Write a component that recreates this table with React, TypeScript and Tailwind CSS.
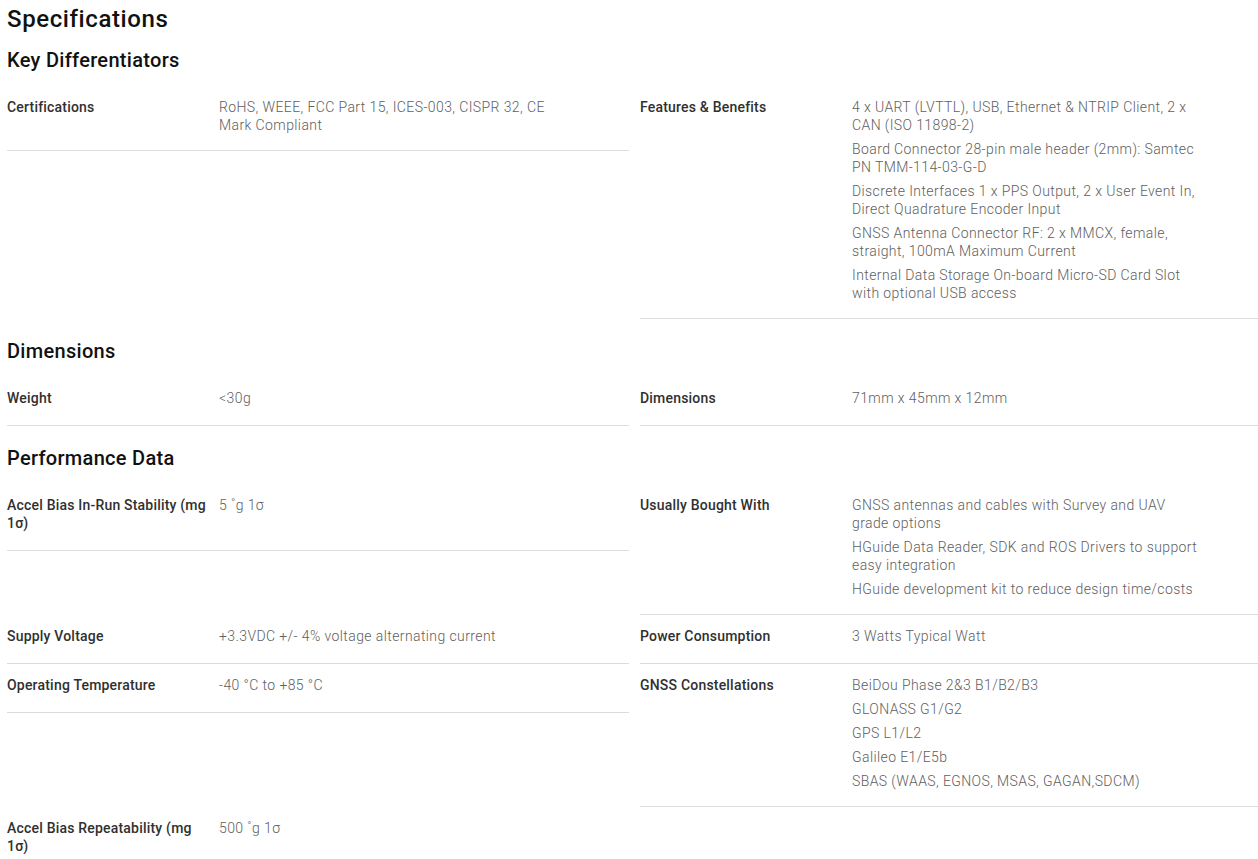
type Spec = {
  label: string;
  values: string[];
};

type Section = {
  title: string;
  items: Spec[];
};

const sections: Section[] = [
  {
    title: "Key Differentiators",
    items: [
      {
        label: "Certifications",
        values: ["RoHS, WEEE, FCC Part 15, ICES-003, CISPR 32, CE Mark Compliant"],
      },
      {
        label: "Features & Benefits",
        values: [
          "4 x UART (LVTTL), USB, Ethernet & NTRIP Client, 2 x CAN (ISO 11898-2)",
          "Board Connector 28-pin male header (2mm): Samtec PN TMM-114-03-G-D",
          "Discrete Interfaces 1 x PPS Output, 2 x User Event In, Direct Quadrature Encoder Input",
          "GNSS Antenna Connector RF: 2 x MMCX, female, straight, 100mA Maximum Current",
          "Internal Data Storage On-board Micro-SD Card Slot with optional USB access",
        ],
      },
    ],
  },
  {
    title: "Dimensions",
    items: [
      { label: "Weight", values: ["<30g"] },
      { label: "Dimensions", values: ["71mm x 45mm x 12mm"] },
    ],
  },
  {
    title: "Performance Data",
    items: [
      { label: "Accel Bias In-Run Stability (mg 1σ)", values: ["5 ˚g 1σ"] },
      {
        label: "Usually Bought With",
        values: [
          "GNSS antennas and cables with Survey and UAV grade options",
          "HGuide Data Reader, SDK and ROS Drivers to support easy integration",
          "HGuide development kit to reduce design time/costs",
        ],
      },
      {
        label: "Supply Voltage",
        values: ["+3.3VDC +/- 4% voltage alternating current"],
      },
      { label: "Power Consumption", values: ["3 Watts Typical Watt"] },
      { label: "Operating Temperature", values: ["-40 °C to +85 °C"] },
      {
        label: "GNSS Constellations",
        values: [
          "BeiDou Phase 2&3 B1/B2/B3",
          "GLONASS G1/G2",
          "GPS L1/L2",
          "Galileo E1/E5b",
          "SBAS (WAAS, EGNOS, MSAS, GAGAN,SDCM)",
        ],
      },
      { label: "Accel Bias Repeatability (mg 1σ)", values: ["500 ˚g 1σ"] },
    ],
  },
];

export default function App() {
  return (
    <div className="min-h-screen bg-white font-['Roboto','Liberation_Sans',sans-serif] text-[#1a1a1a]">
      <div className="pl-[7px]">
        <h2 className="pt-[3px] text-[24px] leading-[32px] tracking-[0.6px] font-medium text-[#111]">
          Specifications
        </h2>

        {sections.map((s, i) => (
          <section key={s.title}>
            <h3
              className={`${
                i === 0 ? "mt-[11px]" : "mt-[18px]"
              } mb-[12px] text-[20px] leading-[28px] tracking-[0.3px] font-medium text-[#111]`}
            >
              {s.title}
            </h3>
            <div className="grid grid-cols-[622px_618px] gap-x-[11px] items-start">
              {s.items.map((item) => (
                <SpecRow key={item.label} item={item} />
              ))}
            </div>
          </section>
        ))}
      </div>
    </div>
  );
}

function SpecRow({ item }: { item: Spec }) {
  return (
    <div className="flex items-start pt-3 pb-[10px] border-b border-[#dcdcdc]">
      {/* 項目名 */}
      <div className="w-[206px] mr-[6px] mb-[8px] text-[14px] leading-[18px] tracking-[0.2px] font-medium text-[#303030]">
        {item.label}
      </div>
      {/* 値 */}
      <div className="w-[350px] text-[14px] leading-[18px] tracking-[0.4px] font-light text-[#606060]">
        {item.values.map((v) => (
          <p key={v} className="mb-[6px]">
            {v}
          </p>
        ))}
      </div>
    </div>
  );
}
